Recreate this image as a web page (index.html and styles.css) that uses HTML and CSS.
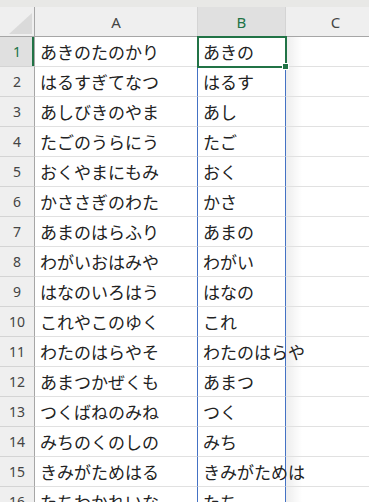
FILE: index.html
```html
<!DOCTYPE html>
<html lang="ja">
<head>
<meta charset="utf-8">
<link rel="stylesheet" href="styles.css">
</head>
<body>
<div class="sheet">
  <div class="topband"></div>
  <div class="grid">
    <div class="corner"><span class="tri"></span></div>
    <div class="colhead">A</div>
    <div class="colhead sel">B</div>
    <div class="colhead">C</div>

    <div class="rowhead sel">1</div><div class="cell">あきのたのかり</div><div class="cell b active">あきの</div><div class="cell c"></div>
    <div class="rowhead">2</div><div class="cell a">はるすぎてなつ</div><div class="cell b">はるす</div><div class="cell c"></div>
    <div class="rowhead">3</div><div class="cell a">あしびきのやま</div><div class="cell b">あし</div><div class="cell c"></div>
    <div class="rowhead">4</div><div class="cell a">たごのうらにう</div><div class="cell b">たご</div><div class="cell c"></div>
    <div class="rowhead">5</div><div class="cell a">おくやまにもみ</div><div class="cell b">おく</div><div class="cell c"></div>
    <div class="rowhead">6</div><div class="cell a">かささぎのわた</div><div class="cell b">かさ</div><div class="cell c"></div>
    <div class="rowhead">7</div><div class="cell a">あまのはらふり</div><div class="cell b">あまの</div><div class="cell c"></div>
    <div class="rowhead">8</div><div class="cell a">わがいおはみや</div><div class="cell b">わがい</div><div class="cell c"></div>
    <div class="rowhead">9</div><div class="cell a">はなのいろはう</div><div class="cell b">はなの</div><div class="cell c"></div>
    <div class="rowhead">10</div><div class="cell a">これやこのゆく</div><div class="cell b">これ</div><div class="cell c"></div>
    <div class="rowhead">11</div><div class="cell a">わたのはらやそ</div><div class="cell b">わたのはらや</div><div class="cell c"></div>
    <div class="rowhead">12</div><div class="cell a">あまつかぜくも</div><div class="cell b">あまつ</div><div class="cell c"></div>
    <div class="rowhead">13</div><div class="cell a">つくばねのみね</div><div class="cell b">つく</div><div class="cell c"></div>
    <div class="rowhead">14</div><div class="cell a">みちのくのしの</div><div class="cell b">みち</div><div class="cell c"></div>
    <div class="rowhead">15</div><div class="cell a">きみがためはる</div><div class="cell b">きみがためは</div><div class="cell c"></div>
    <div class="rowhead">16</div><div class="cell a">たちわかれいな</div><div class="cell b">たち</div><div class="cell c"></div>
  </div>
</div>
</body>
</html>
```

FILE: styles.css
```css
html, body {
  margin: 0;
  padding: 0;
  background: #ffffff;
  overflow: hidden;
}

.sheet {
  width: 369px;
  height: 502px;
  overflow: hidden;
}

.topband {
  height: 7px;
  background: #e8e8e6;
}

.grid {
  display: grid;
  grid-template-columns: 35px 163px 88px 100px;
  grid-template-rows: 30px;
  grid-auto-rows: 30px;
  width: 386px;
}

.grid > div {
  box-sizing: border-box;
}

.corner {
  background: #efefef;
  border-right: 1px solid #a6a6a6;
  border-bottom: 1px solid #a6a6a6;
  display: flex;
  justify-content: flex-end;
  align-items: flex-end;
  padding: 0 2px 2px 0;
}

.tri {
  width: 23px;
  height: 21px;
  background: #dadada;
  clip-path: polygon(100% 0, 100% 100%, 0 100%);
}

.colhead {
  background: #efefef;
  border-right: 1px solid #d4d4d4;
  border-bottom: 1px solid #a6a6a6;
  display: flex;
  align-items: center;
  justify-content: center;
  font-family: "Noto Sans", "Liberation Sans", sans-serif;
  font-size: 15px;
  color: #444444;
  padding-top: 1px;
}

.colhead.sel {
  background: #e0e0e0;
  color: #217346;
}

.rowhead {
  background: #efefef;
  border-right: 1px solid #a6a6a6;
  border-bottom: 1px solid #d4d4d4;
  display: flex;
  align-items: center;
  justify-content: center;
  font-family: "Noto Sans", "Liberation Sans", sans-serif;
  font-size: 14px;
  color: #444444;
}

.rowhead.sel {
  background: #e0e0e0;
  color: #217346;
  box-shadow: inset -2px 0 0 #217346;
}

.cell {
  border-right: 1px solid #e1e1e1;
  border-bottom: 1px solid #e1e1e1;
  display: flex;
  align-items: center;
  padding-left: 5px;
  font-family: "Noto Sans CJK JP", "Noto Sans", sans-serif;
  font-size: 17px;
  color: #222222;
  white-space: nowrap;
  overflow: visible;
}

.cell.a {
  border-right-color: #4472c4;
}

.cell.b {
  border-right-color: #4472c4;
}

.cell.b.active {
  border-right-color: #e1e1e1;
  position: relative;
}

.cell.active::after {
  content: "";
  position: absolute;
  left: -1px;
  top: -1px;
  right: -2px;
  bottom: -2px;
  border: 2px solid #217346;
  pointer-events: none;
}

.cell.active::before {
  content: "";
  position: absolute;
  right: -3px;
  bottom: -3px;
  width: 5px;
  height: 5px;
  background: #217346;
  outline: 1px solid #ffffff;
  z-index: 2;
}

.cell.c {
  background: linear-gradient(to right, rgba(0, 0, 0, 0.07), rgba(0, 0, 0, 0) 16px);
}
```
